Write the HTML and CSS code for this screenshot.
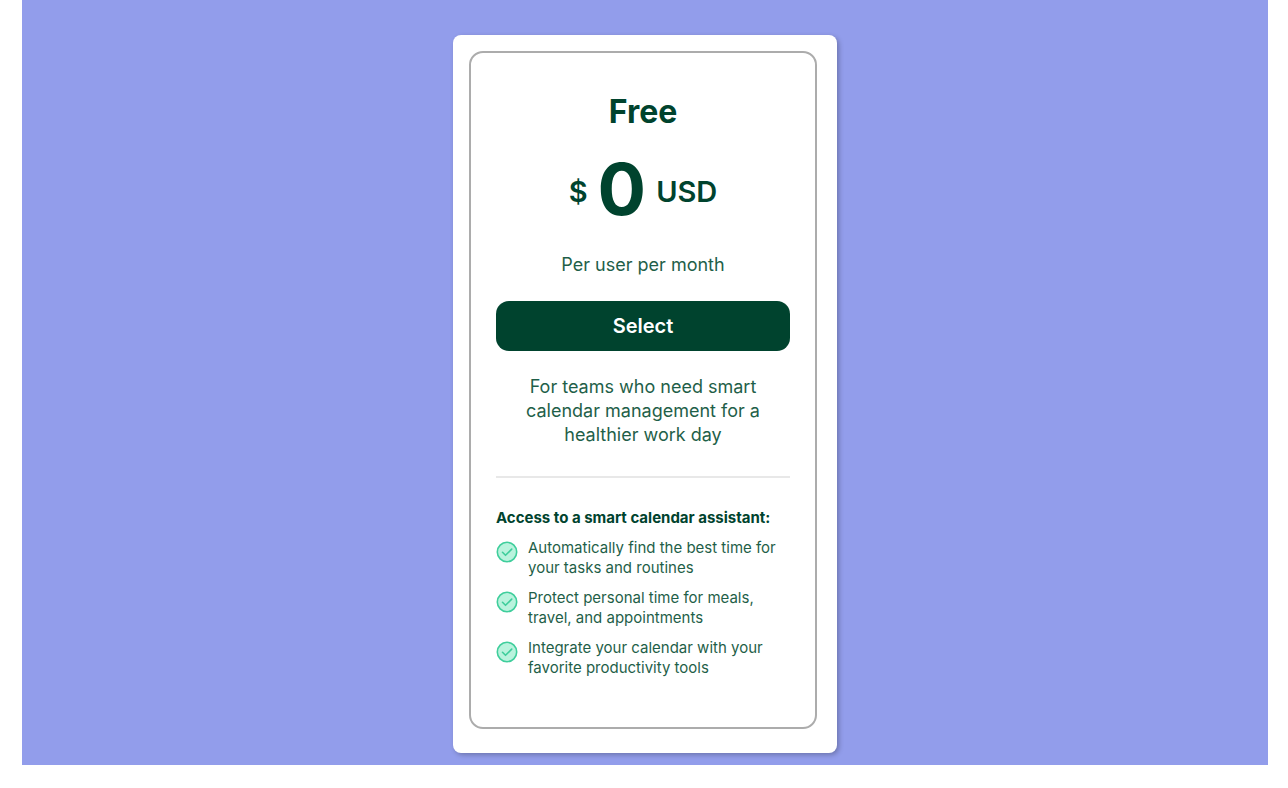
FILE: index.html
```html
<!DOCTYPE html>
<html lang="en">
<head>
    <meta charset="UTF-8">
    <meta name="viewport" content="width=device-width, initial-scale=1.0">
    <title>Pricing</title>
    <link rel="stylesheet" href="styles.css">
</head>
<body>
    <main class="pricing">
        <div class="card">
            <section class="plan">
                <h1 class="plan-name">Free</h1>
                <div class="price">
                    <span class="currency">$</span>
                    <span class="amount">0</span>
                    <span class="currency">USD</span>
                </div>
                <p class="period">Per user per month</p>
                <button type="button" class="select-button">Select</button>
                <p class="description">For teams who need smart calendar management for a healthier work day</p>
                <hr class="divider">
                <h2 class="features-title">Access to a smart calendar assistant:</h2>
                <ul class="features">
                    <li>
                        <svg class="check" viewBox="0 0 22 22" aria-hidden="true">
                            <circle cx="11" cy="11" r="9.7"/>
                            <path d="M6.5 11.3l3 3 6.2-6.2"/>
                        </svg>
                        <span>Automatically find the best time for your tasks and routines</span>
                    </li>
                    <li>
                        <svg class="check" viewBox="0 0 22 22" aria-hidden="true">
                            <circle cx="11" cy="11" r="9.7"/>
                            <path d="M6.5 11.3l3 3 6.2-6.2"/>
                        </svg>
                        <span>Protect personal time for meals, travel, and appointments</span>
                    </li>
                    <li>
                        <svg class="check" viewBox="0 0 22 22" aria-hidden="true">
                            <circle cx="11" cy="11" r="9.7"/>
                            <path d="M6.5 11.3l3 3 6.2-6.2"/>
                        </svg>
                        <span>Integrate your calendar with your favorite productivity tools</span>
                    </li>
                </ul>
            </section>
        </div>
    </main>
</body>
</html>
```
FILE: styles.css
```css
* {
    box-sizing: border-box;
}

body {
    margin: 0 20px 23px 22px;
    font-family: Inter, sans-serif;
    color: #00432e;
    background-color: #fff;
}

h1, h2, p, ul {
    margin: 0;
    padding: 0;
}

.pricing {
    display: flex;
    justify-content: center;
    padding: 35px 0 12px;
    background-color: #929deb;
}

.card {
    width: 384px;
    padding: 16px 20px 24px 16px;
    background-color: #fff;
    border-radius: 8px;
    box-shadow: 2px 2px 5px rgba(0, 0, 0, 0.25);
}

.plan {
    padding: 41px 25px 49px;
    border: 2px solid #acacac;
    border-radius: 14px;
    text-align: center;
}

.plan-name {
    font-size: 32px;
    font-weight: 700;
    line-height: 36px;
}

.price {
    display: flex;
    justify-content: center;
    align-items: center;
    gap: 10px;
    margin-top: 19px;
    font-weight: 600;
}

.currency {
    padding-top: 6px;
    font-size: 29px;
    line-height: 40px;
}

.amount {
    font-size: 72px;
    font-weight: 700;
    line-height: 80px;
}

.period {
    margin-top: 24px;
    font-size: 18px;
    line-height: 24px;
    color: #1f5f49;
}

.select-button {
    width: 100%;
    height: 50px;
    margin-top: 24px;
    border: none;
    border-radius: 13px;
    background-color: #00432e;
    color: #fff;
    font-family: inherit;
    font-size: 20px;
    font-weight: 600;
    cursor: pointer;
}

.description {
    margin-top: 24px;
    padding: 0 28px;
    font-size: 18px;
    line-height: 24px;
    color: #1f5f49;
}

.divider {
    height: 2px;
    margin: 29px 0 30px;
    border: none;
    background-color: #e8e8e8;
}

.features-title {
    font-size: 15px;
    font-weight: 700;
    line-height: 20px;
    text-align: left;
}

.features {
    display: grid;
    gap: 10px;
    margin-top: 10px;
    list-style: none;
    text-align: left;
    font-size: 15px;
    line-height: 20px;
    color: #1f5f49;
}

.features li {
    display: flex;
    gap: 10px;
}

.check {
    flex: none;
    width: 22px;
    height: 22px;
    margin-top: 3px;
    fill: #b9f3dd;
    stroke: #3fce9c;
    stroke-width: 1.6;
}

.check path {
    fill: none;
    stroke-linecap: round;
    stroke-linejoin: round;
}
```
